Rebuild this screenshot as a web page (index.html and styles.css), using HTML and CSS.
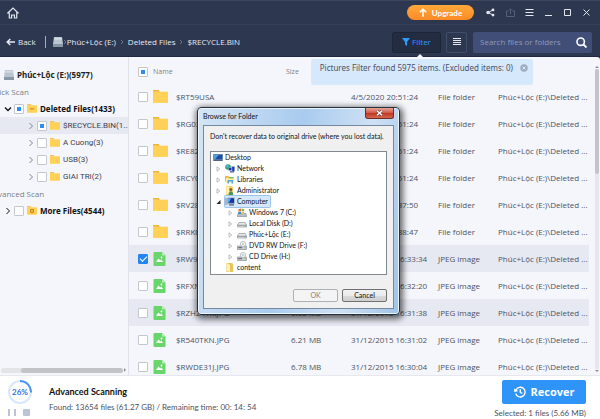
FILE: index.html
```
<!DOCTYPE html>
<html lang="en">
<head>
<meta charset="UTF-8">
<meta name="viewport" content="width=device-width, initial-scale=1.0">
<title>Data Recovery</title>
<link rel="stylesheet" href="styles.css">
</head>
<body>

<!-- Shared icons -->
<svg class="sprite" aria-hidden="true">
  <symbol id="folder" viewBox="0 0 14 12"><path fill="#ffd156" d="M0 1.500h14V12H0z"/><path fill="#f2b632" d="M0 0h5.500l.8 1.500H0z"/></symbol>
  <symbol id="folder-deleted" viewBox="0 0 14 12"><path fill="#ffd156" d="M0 1.500h14V12H0z"/><path fill="#f2b632" d="M0 0h5.500l.8 1.500H0z"/><path stroke="#b98518" stroke-width="1.300" d="M4 6.500h6"/></symbol>
  <symbol id="folder-more" viewBox="0 0 14 12"><path fill="#ffd156" d="M0 1.500h14V12H0z"/><path fill="#f2b632" d="M0 0h5.500l.8 1.500H0z"/><circle cx="7" cy="6.700" r="2.200" fill="none" stroke="#c58a1c" stroke-width="1.800"/></symbol>
  <symbol id="image" viewBox="0 0 12 14"><path fill="#68d66b" d="M1 0h7.500L12 3.500V13a1 1 0 0 1-1 1H1a1 1 0 0 1-1-1V1a1 1 0 0 1 1-1z"/><path fill="#b5efb2" d="M8.500 0 12 3.500H8.500z"/><path fill="#fff" d="M2.500 10 5 6.500l1.700 2 1-1L9.700 10z"/><circle cx="8" cy="5.500" r=".9" fill="#fff"/></symbol>
  <symbol id="disk" viewBox="0 0 10 10"><path fill="#b9c4cf" d="M1 0h8l1 7H0z"/><path fill="#8797a8" d="M0 7h10v3H0z"/><path fill="#d3dbe2" d="M1.500.7h7l.4 2H1.200z"/></symbol>
  <symbol id="chevron" viewBox="0 0 6 8"><path fill="none" stroke="currentColor" d="M1.500 1 4.500 4 1.500 7"/></symbol>
  <symbol id="chevron-down" viewBox="0 0 8 6"><path fill="none" stroke="currentColor" stroke-width="1.300" d="M1 1.500l3 3 3-3"/></symbol>
  <symbol id="tri" viewBox="0 0 5 6"><path fill="#fff" stroke="#a0a0a0" stroke-width=".7" d="M1 .8 3.800 3 1 5.200z"/></symbol>
  <symbol id="tri-open" viewBox="0 0 5 6"><path fill="#222" d="M4.500 1v4h-4z"/></symbol>
  <symbol id="desktop" viewBox="0 0 10 9"><path fill="#8aa0bd" d="M0 1h10v7H0z"/><path fill="#1b4f9c" d="M.7 1.700h8.600v4.800H.7z"/><path fill="#4fa0df" d="M.7 1.700h5L2 6.500H.7z"/><path fill="#2f3f57" d="M.7 7h8.600v.6H.7z"/></symbol>
  <symbol id="network" viewBox="0 0 10 9"><circle cx="3" cy="3" r="2.800" fill="#2ba15a"/><path fill="#4db8f0" d="M.6 2 3 .3 4 2 2 4z"/><path fill="#1736ae" stroke="#b7c6dd" stroke-width=".5" d="M3.500 3.500h3.500v3H3.500zM6.500 2.500h3.200v4.700H6.500z"/><path fill="#49628a" d="M5 7.200h4v1.300H5z"/></symbol>
  <symbol id="libraries" viewBox="0 0 10 9"><path fill="#e4bb50" d="M0 1h3.500l.6 1H9v5H0z"/><path fill="#fff0a8" d="M1 3h8l-.5 5H.5z"/><path fill="#50a9dc" d="M2.500 5H8v3.500H6.500v-2H4v2H2.500z"/><path fill="#79bd5c" d="M4 2h4v1.500H4z"/></symbol>
  <symbol id="user" viewBox="0 0 10 9"><path fill="#f3d169" d="M1 0h5l2 1v8H1z"/><path fill="#fff3b7" d="M1.500.5H4V8H1.500z"/><circle cx="5.800" cy="3.400" r="1.500" fill="#8a5e37"/><path fill="#4d9159" d="M3.500 9c0-5 4.700-5 4.700 0z"/></symbol>
  <symbol id="computer" viewBox="0 0 10 9"><path fill="#adb6c4" d="M0 1h2.500v7H0z"/><path fill="#7589ab" d="M2.500.7H9.500v6H2.500z"/><path fill="#1435a6" d="M3 1.300h6v4.500H3z"/><path fill="#64a7ea" d="M3 1.300h3L4 5.800H3z"/><path fill="#4d5a6d" d="M4 7.300h5V8.500H4z"/></symbol>
  <symbol id="windows" viewBox="0 0 10 9"><path fill="#b9bec2" stroke="#6e767c" stroke-width=".5" d="M1 5.500h8l.7 2v1.200H.3V7.500z"/><path fill="#e56d36" d="M1.500 1.200 4 .6v2.500l-2.700.5z"/><path fill="#79b850" d="m4.500.6 2.800.6-.2 2.400-2.600-.5z"/><path fill="#3e8bd0" d="m1.300 4 2.700-.4V6H1z"/><path fill="#f2c139" d="m4.500 3.600 2.600.4-.2 2H4.500z"/></symbol>
  <symbol id="drive" viewBox="0 0 10 9"><path fill="#e5e7e8" stroke="#82898e" stroke-width=".6" d="M2 3.500h6.200L9.600 6v2H.4V6z"/><path stroke="#74808a" stroke-width=".8" d="M.5 6.300h9"/><path fill="#58b65d" d="M7.500 6.800h1.300v.8H7.500z"/></symbol>
  <symbol id="disc" viewBox="0 0 10 9"><path fill="#cdd1d5" stroke="#777f86" stroke-width=".6" d="M.4 5h9v3.500h-9z"/><circle cx="6" cy="3" r="2.700" fill="#eef1f3" stroke="#8c969e" stroke-width=".5"/><circle cx="6" cy="3" r=".7" fill="#8c969e"/><path fill="#57595b" d="M1.200 6.200h4v1h-4z"/><path fill="#5db45b" d="M7.400 6.500h1.200v.8H7.400z"/></symbol>
  <symbol id="dir" viewBox="0 0 10 9"><path fill="#e8c65d" d="M1.500 0h4.700l2 .8V9H1.500z"/><path fill="#fff2ad" d="M2 .5 5 1.700V9L2 8z"/></symbol>
</svg>

<header class="titlebar">
  <a class="home" href="#" aria-label="Home"><svg width="12" height="12" viewBox="0 0 12 12"><path fill="none" stroke="currentColor" stroke-width="1.200" d="M.8 6 6 1l5.200 5H9.700v5H7.400V8H4.600v3H2.300V6z"/></svg></a>
  <button class="upgrade"><svg width="8" height="9" viewBox="0 0 8 9"><path fill="none" stroke="#fff" stroke-width="1.500" d="M4 9V1.200M.8 4.200 4 1.200l3.200 3"/></svg>Upgrade</button>
  <button class="win-btn" aria-label="Share"><svg width="9" height="9" viewBox="0 0 9 9"><path fill="none" stroke="currentColor" d="M7 2 2.200 4.500 7 7"/><circle cx="2" cy="4.500" r="1.700" fill="currentColor"/><circle cx="7" cy="1.900" r="1.400" fill="currentColor"/><circle cx="7" cy="7.100" r="1.400" fill="currentColor"/></svg></button>
  <button class="win-btn dim" aria-label="Export"><svg width="9" height="9" viewBox="0 0 9 9"><path fill="none" stroke="currentColor" d="M2.500 3H.5v5.500h8V3h-2M4.500 6V1M3 2.300 4.500.8 6 2.300"/></svg></button>
  <button class="win-btn" aria-label="Menu"><svg width="9" height="9" viewBox="0 0 9 9"><path stroke="currentColor" d="M.5 1.500h8M.5 4.500h8M.5 7.500h8"/></svg></button>
  <button class="win-btn" aria-label="Minimize"><svg width="9" height="9" viewBox="0 0 9 9"><path stroke="currentColor" d="M1 7.500h7"/></svg></button>
  <button class="win-btn" aria-label="Maximize"><svg width="9" height="9" viewBox="0 0 9 9"><path fill="none" stroke="currentColor" d="M1.500 1.500h6v6h-6z"/></svg></button>
  <button class="win-btn" aria-label="Close"><svg width="9" height="9" viewBox="0 0 9 9"><path stroke="currentColor" d="m1.500 1.500 6 6M7.500 1.500l-6 6"/></svg></button>
</header>

<div class="toolbar">
  <button class="back"><svg width="9" height="8" viewBox="0 0 9 8"><path fill="none" stroke="currentColor" stroke-width="1.500" d="M9 4H1.200M4.300 1 1.200 4l3.100 3"/></svg>Back</button>
  <nav class="crumbs">
    <svg width="10" height="10"><use href="#disk"/></svg>
    <svg class="sep first" width="4" height="6"><use href="#chevron"/></svg>
    <a href="#">Phúc+Lộc (E:)</a>
    <svg class="sep" width="4" height="6"><use href="#chevron"/></svg>
    <a href="#">Deleted Files</a>
    <svg class="sep" width="4" height="6"><use href="#chevron"/></svg>
    <a href="#">$RECYCLE.BIN</a>
  </nav>
  <button class="filter"><svg width="8" height="8" viewBox="0 0 8 8"><path fill="currentColor" d="M0 0h8L5 4v4L3 6.500V4z"/></svg>Filter</button>
  <button class="view" aria-label="List view"><svg width="8" height="8" viewBox="0 0 8 8"><path stroke="currentColor" d="M0 .5h8M0 2.500h8M0 4.500h8M0 6.500h8"/></svg></button>
  <div class="search">
    <input type="text" placeholder="Search files or folders" aria-label="Search files or folders">
    <button aria-label="Search"><svg width="11" height="11" viewBox="0 0 11 11"><circle cx="4.700" cy="4.700" r="3.700" fill="none" stroke="#fff" stroke-width="1.600"/><path stroke="#fff" stroke-width="1.800" d="m7.500 7.500 3 3"/></svg></button>
  </div>
</div>

<main class="content">
  <aside class="sidebar">
    <div class="drive"><svg width="10" height="10"><use href="#disk"/></svg>Phúc+Lộc (E:)(5977)</div>
    <div class="scan-type">Quick Scan</div>
    <ul class="tree">
      <li class="top"><svg width="8" height="6"><use href="#chevron-down"/></svg><label><input type="checkbox" class="partial"><svg width="10" height="9"><use href="#folder-deleted"/></svg>Deleted Files(1433)</label></li>
      <li class="sub active"><svg width="6" height="8"><use href="#chevron"/></svg><label><input type="checkbox" class="partial"><svg width="10" height="9"><use href="#folder"/></svg>$RECYCLE.BIN(1...</label></li>
      <li class="sub"><svg width="6" height="8"><use href="#chevron"/></svg><label><input type="checkbox"><svg width="10" height="9"><use href="#folder"/></svg>A Cuong(3)</label></li>
      <li class="sub"><svg width="6" height="8"><use href="#chevron"/></svg><label><input type="checkbox"><svg width="10" height="9"><use href="#folder"/></svg>USB(3)</label></li>
      <li class="sub"><svg width="6" height="8"><use href="#chevron"/></svg><label><input type="checkbox"><svg width="10" height="9"><use href="#folder"/></svg>GIAI TRI(2)</label></li>
    </ul>
    <div class="scan-type">Advanced Scan</div>
    <ul class="tree">
      <li class="top"><svg width="8" height="8"><use href="#chevron"/></svg><label><input type="checkbox"><svg width="10" height="9"><use href="#folder-more"/></svg>More Files(4544)</label></li>
    </ul>
    <div class="hscroll"><div class="hthumb"></div></div>
  </aside>

  <section class="files">
    <table>
      <colgroup><col class="c-check"><col class="c-icon"><col><col class="c-size"><col class="c-date"><col class="c-type"><col class="c-path"></colgroup>
      <thead>
        <tr><th><input type="checkbox" class="partial" aria-label="Select all"></th><th colspan="2">Name</th><th>Size</th><th></th><th></th><th></th></tr>
      </thead>
      <tbody>
        <tr><td><input type="checkbox" aria-label="$RT59USA"></td><td><svg width="15" height="13"><use href="#folder"/></svg></td><td>$RT59USA</td><td></td><td>4/5/2020 20:51:24</td><td>File folder</td><td>Phúc+Lộc (E:)\Deleted ...</td></tr>
        <tr><td><input type="checkbox" aria-label="$RG0"></td><td><svg width="15" height="13"><use href="#folder"/></svg></td><td>$RG02</td><td></td><td>4/5/2020 20:51:24</td><td>File folder</td><td>Phúc+Lộc (E:)\Deleted ...</td></tr>
        <tr><td><input type="checkbox" aria-label="$RE82"></td><td><svg width="15" height="13"><use href="#folder"/></svg></td><td>$RE82</td><td></td><td>4/5/2020 20:51:24</td><td>File folder</td><td>Phúc+Lộc (E:)\Deleted ...</td></tr>
        <tr><td><input type="checkbox" aria-label="$RCY0"></td><td><svg width="15" height="13"><use href="#folder"/></svg></td><td>$RCY0</td><td></td><td>4/5/2020 20:51:24</td><td>File folder</td><td>Phúc+Lộc (E:)\Deleted ...</td></tr>
        <tr><td><input type="checkbox" aria-label="$RV28"></td><td><svg width="15" height="13"><use href="#folder"/></svg></td><td>$RV28</td><td></td><td>4/5/2020 20:37:50</td><td>File folder</td><td>Phúc+Lộc (E:)\Deleted ...</td></tr>
        <tr><td><input type="checkbox" aria-label="$RRK0"></td><td><svg width="15" height="13"><use href="#folder"/></svg></td><td>$RRK0</td><td></td><td>4/5/2020 20:38:47</td><td>File folder</td><td>Phúc+Lộc (E:)\Deleted ...</td></tr>
        <tr class="selected"><td><input type="checkbox" checked aria-label="$RW9"></td><td><svg width="13" height="14"><use href="#image"/></svg></td><td>$RW9</td><td></td><td>31/12/2015 16:33:34</td><td>JPEG image</td><td>Phúc+Lộc (E:)\Deleted ...</td></tr>
        <tr><td><input type="checkbox" aria-label="$RFXN"></td><td><svg width="13" height="14"><use href="#image"/></svg></td><td>$RFXN</td><td></td><td>31/12/2015 16:32:20</td><td>JPEG image</td><td>Phúc+Lộc (E:)\Deleted ...</td></tr>
        <tr class="selected"><td><input type="checkbox" aria-label="$RZHZ"></td><td><svg width="13" height="14"><use href="#image"/></svg></td><td>$RZHZ4TK.JPG</td><td>6.65 MB</td><td>31/12/2015 16:31:38</td><td>JPEG image</td><td>Phúc+Lộc (E:)\Deleted ...</td></tr>
        <tr><td><input type="checkbox" aria-label="$R540TKN.JPG"></td><td><svg width="13" height="14"><use href="#image"/></svg></td><td>$R540TKN.JPG</td><td>6.21 MB</td><td>31/12/2015 16:31:02</td><td>JPEG image</td><td>Phúc+Lộc (E:)\Deleted ...</td></tr>
        <tr><td><input type="checkbox" aria-label="$RWDE31J.JPG"></td><td><svg width="13" height="14"><use href="#image"/></svg></td><td>$RWDE31J.JPG</td><td>6.78 MB</td><td>31/12/2015 16:30:04</td><td>JPEG image</td><td>Phúc+Lộc (E:)\Deleted ...</td></tr>
      </tbody>
    </table>
    <div class="vscroll"><div class="vthumb"></div></div>
    <div class="notice">Pictures Filter found 5975 items. (Excluded items: 0)<button aria-label="Dismiss"><svg width="8" height="8" viewBox="0 0 8 8"><circle cx="4" cy="4" r="3.700" fill="#9aabbd"/><path stroke="#dceaf8" d="m2.500 2.500 3 3M5.500 2.500l-3 3"/></svg></button></div>
  </section>
</main>

<footer class="status">
  <div class="progress">
    <div class="ring">
      <svg width="24" height="24" viewBox="0 0 24 24"><circle cx="12" cy="12" r="11" fill="none" stroke="#d9e7fb" stroke-width="2"/><path fill="none" stroke="#4a94f5" stroke-width="2" d="M12 1a11 11 0 0 1 11 11.500"/></svg>
      <span>26%</span>
    </div>
    <div class="controls">
      <button aria-label="Pause"><svg width="8" height="7" viewBox="0 0 8 7"><path fill="#bcc3d6" d="M0 0h2v7H0zM6 0h2v7H6z"/></svg></button>
      <button aria-label="Stop"><svg width="7" height="7" viewBox="0 0 7 7"><rect width="7" height="7" rx="1" fill="#bcc3d6"/></svg></button>
    </div>
  </div>
  <div class="scan-info">
    <h3>Advanced Scanning</h3>
    <p>Found: 13654 files (61.27 GB) / Remaining time: 00: 14: 54</p>
  </div>
  <div class="recover-box">
    <button class="recover"><svg width="12" height="12" viewBox="0 0 12 12"><path fill="none" stroke="#fff" stroke-width="1.400" d="M2 4a4.800 4.800 0 1 1-.3 3.500M6.300 3.300v3l2 1.200"/><path fill="#fff" d="M0 2.500 4.300 5 .4 6.200z"/></svg>Recover</button>
    <p>Selected: 1 files (5.66 MB)</p>
  </div>
</footer>

<div class="dialog" role="dialog" aria-labelledby="dialogTitle">
  <div class="dialog-title">
    <span id="dialogTitle">Browse for Folder</span>
    <button aria-label="Close"><svg width="7" height="6" viewBox="0 0 7 6"><path stroke="#6b3a38" stroke-width="2.600" d="m1 .7 5 4.600M6 .7 1 5.300"/><path stroke="#fff" stroke-width="1.500" d="m1 .7 5 4.600M6 .7 1 5.300"/></svg></button>
  </div>
  <div class="dialog-body">
    <p>Don't recover data to original drive (where you lost data).</p>
    <ul class="folders">
      <li><svg width="10" height="9"><use href="#desktop"/></svg>Desktop</li>
      <li class="l1"><svg class="tw" width="5" height="6"><use href="#tri"/></svg><svg width="10" height="9"><use href="#network"/></svg>Network</li>
      <li class="l1"><svg class="tw" width="5" height="6"><use href="#tri"/></svg><svg width="10" height="9"><use href="#libraries"/></svg>Libraries</li>
      <li class="l1"><svg class="tw" width="5" height="6"><use href="#tri"/></svg><svg width="10" height="9"><use href="#user"/></svg>Administrator</li>
      <li class="l1"><svg class="tw" width="5" height="6"><use href="#tri-open"/></svg><span class="current"><svg width="10" height="9"><use href="#computer"/></svg>Computer</span></li>
      <li class="l2"><svg class="tw" width="5" height="6"><use href="#tri"/></svg><svg width="10" height="9"><use href="#windows"/></svg>Windows 7 (C:)</li>
      <li class="l2"><svg class="tw" width="5" height="6"><use href="#tri"/></svg><svg width="10" height="9"><use href="#drive"/></svg>Local Disk (D:)</li>
      <li class="l2"><svg class="tw" width="5" height="6"><use href="#tri"/></svg><svg width="10" height="9"><use href="#drive"/></svg>Phúc+Lộc (E:)</li>
      <li class="l2"><svg class="tw" width="5" height="6"><use href="#tri"/></svg><svg width="10" height="9"><use href="#disc"/></svg>DVD RW Drive (F:)</li>
      <li class="l2"><svg class="tw" width="5" height="6"><use href="#tri"/></svg><svg width="10" height="9"><use href="#disc"/></svg>CD Drive (H:)</li>
      <li class="leaf"><svg width="10" height="9"><use href="#dir"/></svg>content</li>
    </ul>
    <div class="dialog-buttons">
      <button disabled>OK</button>
      <button>Cancel</button>
    </div>
  </div>
</div>

</body>
</html>
```
FILE: styles.css
```
* {
  box-sizing: border-box;
}
body {
  margin: 0;
  height: 100vh;
  display: flex;
  flex-direction: column;
  overflow: hidden;
  position: relative;
  background: #2d3850;
  color: #4c5263;
  font-family: "Open Sans", "Noto Sans", sans-serif;
  font-size: 8px;
  line-height: 12px;
}
p, h3, ul {
  margin: 0;
  padding: 0;
  list-style: none;
}
button {
  display: flex;
  align-items: center;
  justify-content: center;
  padding: 0;
  border: none;
  background: none;
  color: inherit;
  font: inherit;
  cursor: pointer;
}
a {
  color: inherit;
  text-decoration: none;
}
svg {
  flex: none;
  display: block;
}
.sprite {
  position: absolute;
  width: 0;
  height: 0;
}

/* Title bar */
.titlebar {
  display: flex;
  align-items: center;
  height: 25px;
  padding: 0 9px 0 7px;
  border-top: 1px solid #3d4860;
  border-bottom: 1px solid #35405a;
  color: #e3e7ef;
}
.home {
  margin-right: auto;
}
.upgrade {
  gap: 5px;
  width: 67px;
  height: 15px;
  margin-right: 11px;
  border-radius: 8px;
  background: linear-gradient(#ffa93c, #fd8a25);
  color: #fff;
  font-family: Lato, sans-serif;
  font-weight: 700;
}
.win-btn {
  width: 10px;
  margin-left: 9px;
}
.upgrade + .win-btn {
  margin-left: 0;
  margin-right: 1px;
}
.win-btn.dim {
  color: #55607a;
}

/* Toolbar */
.toolbar {
  display: flex;
  align-items: center;
  height: 32px;
  padding: 3px 8px 0 6px;
  border-bottom: 1px solid #1f2840;
  color: #e6e9f1;
}
.back {
  gap: 3px;
  height: 12px;
  padding-right: 9px;
  border-right: 1px solid #a5acba;
}
.crumbs {
  flex: 1;
  display: flex;
  align-items: center;
  padding-left: 7px;
}
.sep {
  margin: 0 4px;
  color: #8d96a9;
}
.sep.first {
  margin: 0;
}
.filter {
  position: relative;
  gap: 2px;
  width: 49px;
  height: 21px;
  margin-right: 5px;
  border: 1px solid #1d2538;
  border-radius: 2px;
  background: #232c41;
  color: #2f9bff;
}
.filter::after {
  content: "";
  position: absolute;
  top: 100%;
  right: 17px;
  margin-top: 2px;
  border: solid transparent;
  border-width: 0 3px 3px;
  border-bottom-color: #f5f6fb;
}
.view {
  width: 21px;
  height: 21px;
  margin-right: 6px;
  border: 1px solid #414d69;
  border-radius: 2px;
}
.search {
  display: flex;
  align-items: center;
  width: 119px;
  height: 21px;
  padding: 0 5px 0 7px;
  border-radius: 2px;
  background: #414e77;
}
.search input {
  flex: 1;
  min-width: 0;
  padding: 0;
  border: none;
  outline: none;
  background: none;
  color: #fff;
  font: inherit;
}
.search input::placeholder {
  color: #8f9abb;
}

/* Checkboxes */
input[type="checkbox"] {
  appearance: none;
  flex: none;
  display: flex;
  align-items: center;
  justify-content: center;
  width: 10px;
  height: 10px;
  margin: 0;
  border: 1px solid #c3c7ce;
  border-radius: 1px;
  background: #fff;
}
input.partial::before {
  content: "";
  width: 4px;
  height: 4px;
  background: #2b8ef5;
}
input[type="checkbox"]:checked {
  border-color: #2185f5;
  background: #2185f5;
}
input[type="checkbox"]:checked::before {
  content: "";
  width: 6px;
  height: 3px;
  border: solid #fff;
  border-width: 0 0 1px 1px;
  transform: translateY(-1px) rotate(-45deg);
}

/* Content */
.content {
  flex: 1;
  min-height: 0;
  display: flex;
  background: #f5f6fb;
  border-radius: 0 3px 0 0;
}
.sidebar {
  flex: none;
  display: flex;
  flex-direction: column;
  width: 129px;
  padding: 9px 0 2px;
  border-right: 1px solid #e0e2e9;
  overflow: hidden;
  white-space: nowrap;
}
.drive {
  display: flex;
  align-items: center;
  gap: 3px;
  height: 17px;
  padding-left: 4px;
  color: #222;
  font-family: "Noto Sans", sans-serif;
  font-weight: 700;
}
.scan-type {
  height: 17px;
  line-height: 17px;
  text-indent: -12px;
  color: #777d8a;
}
.tree li {
  display: flex;
  align-items: center;
  gap: 2px;
  height: 17px;
}
.tree label {
  display: flex;
  align-items: center;
  gap: 3px;
}
.tree .top {
  padding-left: 4px;
  color: #111;
  font-family: "Noto Sans", sans-serif;
  font-weight: 700;
}
.tree .sub {
  gap: 3px;
  padding-left: 28px;
  color: #3c414e;
  font-family: Roboto, sans-serif;
}
.tree .sub > svg {
  color: #7d8493;
}
.tree .active {
  background: #e6e9f2;
}
.hscroll {
  position: relative;
  height: 5px;
  margin: auto 5px 0 1px;
  border-radius: 3px;
  background: #e4e4e6;
}
.hscroll::after {
  content: "";
  position: absolute;
  left: 100%;
  top: 0;
  margin-left: 1px;
  border: solid transparent;
  border-width: 2px 0 2px 2px;
  border-left-color: #8b8d94;
}
.hthumb {
  width: 84%;
  height: 5px;
  margin-left: auto;
  border-radius: 3px;
  background: #c3c4c8;
}

/* File list */
.files {
  flex: 1;
  display: flex;
  min-width: 0;
  position: relative;
  overflow: hidden;
}
table {
  flex: 1;
  align-self: flex-start;
  width: 100%;
  table-layout: fixed;
  border-collapse: collapse;
  white-space: nowrap;
}
.c-check {
  width: 24px;
}
.c-icon {
  width: 23px;
}
.c-size {
  width: 65px;
}
.c-date {
  width: 87px;
}
.c-type {
  width: 60px;
}
.c-path {
  width: 91px;
}
th, td {
  height: 27px;
  padding: 0;
  text-align: left;
  font-weight: 400;
}
th {
  height: 26px;
  padding-top: 4px;
  color: #7b808d;
  font-size: 7px;
}
td:first-child, th:first-child {
  padding-left: 9px;
}
td:nth-child(4) {
  padding-left: 5px;
}
tr.selected {
  background: #e6e9f2;
}
.vscroll {
  position: relative;
  width: 4px;
  margin: 12px 1px 6px 6px;
  background: #e6e7eb;
}
.vscroll::before, .vscroll::after {
  content: "";
  position: absolute;
  left: 0;
  border: solid transparent;
}
.vscroll::before {
  bottom: 100%;
  margin-bottom: 1px;
  border-width: 0 2px 2px;
  border-bottom-color: #8b8d94;
}
.vscroll::after {
  top: 100%;
  margin-top: 1px;
  border-width: 2px 2px 0;
  border-top-color: #8b8d94;
}
.vthumb {
  height: 35%;
  border-radius: 2px;
  background: #c3c4c8;
}
.notice {
  position: absolute;
  top: 2px;
  right: 67px;
  display: flex;
  gap: 7px;
  height: 26px;
  padding: 3px 5px 0 9px;
  border-radius: 2px;
  background: #d6e8fb;
  font-family: "Noto Sans", sans-serif;
}
.notice button {
  height: 12px;
}

/* Status bar */
.status {
  display: flex;
  height: 44px;
  padding: 4px 14px 0 8px;
  border-top: 1px solid #e6e8ee;
  background: #fff;
}
.status p {
  font-family: Lato, sans-serif;
}
.progress {
  width: 41px;
}
.ring {
  display: grid;
  width: 24px;
  height: 24px;
}
.ring svg, .ring span {
  grid-area: 1 / 1;
}
.ring span {
  place-self: center;
  color: #2f6fea;
  font-family: Lato, sans-serif;
  font-weight: 700;
}
.controls {
  display: flex;
  gap: 7px;
  padding-top: 5px;
}
.scan-info {
  flex: 1;
  padding-top: 6px;
}
.scan-info h3 {
  margin-bottom: 3px;
  color: #111;
  font-family: Lato, sans-serif;
  font-size: 9px;
  line-height: 12px;
}
.recover-box {
  display: flex;
  flex-direction: column;
  align-items: flex-end;
}
.recover {
  gap: 5px;
  width: 84px;
  height: 24px;
  margin-bottom: 3px;
  border-radius: 2px;
  background: #2f94f8;
  color: #fff;
  font-size: 11px;
  font-weight: 700;
}

/* Browse dialog */
.dialog {
  position: absolute;
  top: 107px;
  left: 197px;
  width: 203px;
  padding: 0 5px 5px;
  border: 1px solid #27303d;
  border-radius: 4px;
  background: linear-gradient(100deg, #d5e5f5, #a9cbef 45%, #cfe1f4 75%, #9fc3e8);
  box-shadow: inset 0 0 0 1px #eaf4ff, 1px 2px 6px 2px rgba(0, 0, 0, 0.6);
  color: #111;
  font-family: Lato, "Open Sans", sans-serif;
  font-size: 7px;
  line-height: 11px;
  white-space: nowrap;
}
.dialog-title {
  display: flex;
  justify-content: space-between;
  height: 17px;
  line-height: 17px;
}
.dialog-title button {
  width: 29px;
  height: 11px;
  border: 1px solid #6f2b27;
  border-top: none;
  border-radius: 0 0 3px 3px;
  background: linear-gradient(#e5a597, #d2604c 45%, #bd3322 50%, #d5694e);
}
.dialog-body {
  padding: 5px 6px 6px;
  border: 1px solid #74899f;
  background: #f0f0f0;
}
.folders {
  margin-top: 9px;
  padding: 0 0 1px 2px;
  border: 1px solid #828790;
  background: #fff;
}
.folders li, .current {
  display: flex;
  align-items: center;
  gap: 2px;
  height: 11px;
}
.folders .l1 {
  padding-left: 3px;
}
.folders .l2 {
  padding-left: 15px;
}
.folders .leaf {
  padding-left: 12px;
}
.tw {
  margin-right: 2px;
}
.current {
  padding-right: 2px;
  border-radius: 1px;
  background: #d5e8fb;
  box-shadow: 0 0 0 1px #9cc3ea;
}
.dialog-buttons {
  display: flex;
  justify-content: flex-end;
  gap: 4px;
  padding-top: 14px;
}
.dialog-buttons button {
  width: 45px;
  height: 13px;
  border: 1px solid #707070;
  border-radius: 2px;
  background: linear-gradient(#f2f2f2, #ebebeb 50%, #dadada 50%, #cfcfcf);
}
.dialog-buttons button:disabled {
  border-color: #adb2b5;
  background: #f4f4f4;
  color: #838383;
}
```
